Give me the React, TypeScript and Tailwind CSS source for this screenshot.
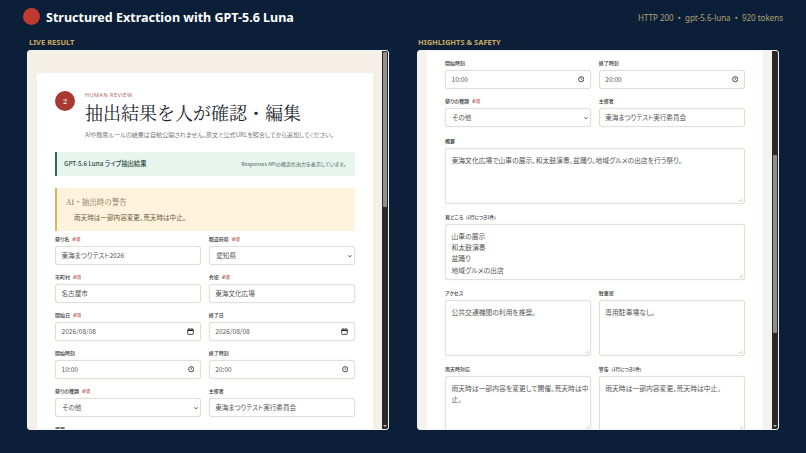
const serif = "font-['Noto_Serif_CJK_JP','Liberation_Serif','Noto_Sans_CJK_JP',serif]";
const sans = "font-['Noto_Sans_CJK_JP','Noto_Sans',sans-serif]";
const palt = "[font-feature-settings:'palt']";

function Label({ text, req, note }: { text: string; req?: boolean; note?: string }) {
  return (
    <div className={`h-[8px] mb-[3px] flex items-center gap-[2px] text-[5px] leading-[8px] font-medium text-[#3a3a3a] whitespace-nowrap ${palt}`}>
      <span>{text}</span>
      {note && <span className="text-[4.5px]">{note}</span>}
      {req && <span className="ml-[1px] text-[4px] text-[#a83a32]">必須</span>}
    </div>
  );
}

function ClockIcon() {
  return (
    <svg width="6.5" height="6.5" viewBox="0 0 12 12" fill="none" stroke="#222" strokeWidth="1.5">
      <circle cx="6" cy="6" r="4.8" />
      <path d="M6 3v3l2 1.5" strokeWidth="1.2" />
    </svg>
  );
}

function CalIcon() {
  return (
    <svg width="7" height="7" viewBox="0 0 12 12" fill="none" stroke="#222" strokeWidth="1.4">
      <rect x="1.2" y="2" width="9.6" height="9" rx="1" />
      <path d="M1.2 4.2h9.6" strokeWidth="2" />
      <path d="M3.5 0.5v2M8.5 0.5v2" />
    </svg>
  );
}

function Box({ value, icon, select, plain }: { value: string; icon?: "clock" | "cal"; select?: boolean; plain?: boolean }) {
  return (
    <div className={`h-[19px] rounded-[3px] border border-[#e2dfd8] shadow-[0_0_1px_#d8d5ce] bg-white flex items-center justify-between text-[6.6px] text-[#555] ${plain ? "" : palt} ${select ? "pl-[6.5px] pr-[2px]" : "pl-[5.5px] pr-[6px]"}`}>
      <span className="whitespace-nowrap">{value}</span>
      {icon === "clock" && <ClockIcon />}
      {icon === "cal" && <CalIcon />}
      {select && (
        <svg width="4" height="4" viewBox="0 0 10 10" fill="none" stroke="#333" strokeWidth="2.4">
          <path d="M1.5 3.5 5 7l3.5-3.5" />
        </svg>
      )}
    </div>
  );
}

function Field({ label, req, note, value, icon, select, plain }: { label: string; req?: boolean; note?: string; value: string; icon?: "clock" | "cal"; select?: boolean; plain?: boolean }) {
  return (
    <div className="min-w-0">
      <Label text={label} req={req} note={note} />
      <Box value={value} icon={icon} select={select} plain={plain} />
    </div>
  );
}

function Area({ label, note, lines }: { label: string; note?: string; lines: string[] }) {
  return (
    <div className="min-w-0">
      <Label text={label} note={note} />
      <div className={`relative h-[56px] rounded-[3px] border border-[#e2dfd8] shadow-[0_0_1px_#d8d5ce] bg-white px-[5.5px] pt-[5.5px] text-[6.8px] leading-[11.4px] text-[#555] ${palt}`}>
        {lines.map((l) => (
          <div key={l} className="whitespace-nowrap">{l}</div>
        ))}
        <svg className="absolute right-[1px] bottom-[1px]" width="4" height="4" viewBox="0 0 4 4" stroke="#aaa" strokeWidth="0.5">
          <path d="M0 4 4 0M2 4l2-2" />
        </svg>
      </div>
    </div>
  );
}

function Scrollbar({ before, thumb }: { before: number; thumb: number }) {
  return (
    <div className="w-[6px] shrink-0 bg-[#2b2a28] flex flex-col items-center">
      <div style={{ height: before }} className="w-full shrink-0" />
      <div style={{ height: thumb }} className="w-[4.5px] shrink-0 bg-[#8f8f8f] rounded-[1px]" />
      <div className="flex-1" />
      <div className="h-[7px] flex items-center justify-center">
        <div className="w-0 h-0 border-l-[2px] border-r-[2px] border-t-[2px] border-l-transparent border-r-transparent border-t-[#bbb]" />
      </div>
    </div>
  );
}

function Row({ children }: { children: React.ReactNode }) {
  return <div className="grid grid-cols-2 gap-x-[7.5px]">{children}</div>;
}

function LeftPanel() {
  return (
    <div className="h-[380px] rounded-[3px] overflow-hidden flex bg-[#f4f0e7] border border-[#f2f2f2]">
      <div className="flex-1 min-w-0 overflow-hidden pl-[9px] pr-[9.5px] pt-[22px]">
        <div className="bg-white h-[400px] pl-[18px] pr-[17.5px] pt-[18px]">
          <div className="flex gap-[10px]">
            <div className={`w-[20px] h-[20px] rounded-full bg-[#a93a33] text-white text-[7px] font-bold flex items-center justify-center shrink-0 ${serif}`}>2</div>
            <div className="min-w-0">
              <div className="text-[5.5px] leading-[8px] tracking-[0.5px] font-medium text-[#a85a52] font-['Open_Sans',sans-serif]">HUMAN REVIEW</div>
              <div className={`text-[18px] leading-[27px] text-[#22262e] whitespace-nowrap ${serif}`}>抽出結果を人が確認・編集</div>
              <div className={`text-[6.1px] leading-[10px] mt-[4px] text-[#77777a] whitespace-nowrap ${palt}`}>AIや簡易ルールの結果は自動公開されません。原文と公式URLを照合してから追加してください。</div>
            </div>
          </div>
          <div className={`mt-[12px] h-[24px] bg-[#e8f5ef] border-l-2 border-[#2f6b57] pl-[7px] pr-[9px] flex items-center justify-between ${palt}`}>
            <span className="text-[6.3px] font-medium text-[#2a4a40]">GPT-5.6 Luna ライブ抽出結果</span>
            <span className="text-[5.1px] text-[#4a6a60]">Responses APIの構造化出力を表示しています。</span>
          </div>
          <div className="mt-[12px] h-[43px] bg-[#fff3dc] border-l-2 border-[#d8b565] pl-[9px] pt-[8px]">
            <div className={`text-[7.5px] leading-[12px] text-[#7a6a4a] ${serif}`}>AI・抽出時の警告</div>
            <div className={`text-[6.6px] leading-[11px] mt-[4px] ml-[8px] text-[#6a5a3a] ${palt}`}>雨天時は一部内容変更、荒天時は中止。</div>
          </div>
          <div className="mt-[4px] flex flex-col gap-[8px]">
            <Row>
              <Field label="祭り名" req value="東海まつりテスト2026" />
              <Field label="都道府県" req value="愛知県" select plain />
            </Row>
            <Row>
              <Field label="市町村" req value="名古屋市" />
              <Field label="会場" req value="東海文化広場" />
            </Row>
            <Row>
              <Field label="開始日" req value="2026/08/08" icon="cal" />
              <Field label="終了日" value="2026/08/08" icon="cal" />
            </Row>
            <Row>
              <Field label="開始時刻" value="10:00" icon="clock" />
              <Field label="終了時刻" value="20:00" icon="clock" />
            </Row>
            <Row>
              <Field label="祭りの種類" req value="その他" select />
              <Field label="主催者" value="東海まつりテスト実行委員会" />
            </Row>
            <Label text="概要" />
          </div>
        </div>
      </div>
      <Scrollbar before={1} thumb={155} />
    </div>
  );
}

function RightPanel() {
  return (
    <div className="h-[380px] rounded-[3px] overflow-hidden flex bg-[#f5f3ee] border border-[#f2f2f2]">
      <div className="flex-1 min-w-0 overflow-hidden pl-[9px] pr-[9.5px]">
        <div className="bg-white h-[400px] pl-[18px] pr-[17.5px] pt-[8px]">
          <div className="flex flex-col gap-[8px]">
            <Row>
              <Field label="開始時刻" value="10:00" icon="clock" />
              <Field label="終了時刻" value="20:00" icon="clock" />
            </Row>
            <Row>
              <Field label="祭りの種類" req value="その他" select />
              <Field label="主催者" value="東海まつりテスト実行委員会" />
            </Row>
          </div>
          <div className="mt-[10px] flex flex-col gap-[9px]">
            <Area label="概要" lines={["東海文化広場で山車の展示、和太鼓演奏、盆踊り、地域グルメの出店を行う祭り。"]} />
            <Area label="見どころ" note="（1行につき1件）" lines={["山車の展示", "和太鼓演奏", "盆踊り", "地域グルメの出店"]} />
            <Row>
              <Area label="アクセス" lines={["公共交通機関の利用を推奨。"]} />
              <Area label="駐車場" lines={["専用駐車場なし。"]} />
            </Row>
            <Row>
              <Area label="雨天時対応" lines={["雨天時は一部内容を変更して開催。荒天時は中", "止。"]} />
              <Area label="警告" note="（1行につき1件）" lines={["雨天時は一部内容変更、荒天時は中止。"]} />
            </Row>
          </div>
        </div>
      </div>
      <Scrollbar before={104} thumb={178} />
    </div>
  );
}

export default function App() {
  return (
    <div className={`w-[806px] h-[453px] overflow-hidden bg-[#0b1f38] ${sans}`}>
      <header className="h-[36px] pl-[23px] pr-[23px] flex items-center justify-between">
        <div className="flex items-center gap-[6px]">
          <div className="w-[17px] h-[17px] rounded-full bg-[#c0392f] -mt-[4px]" />
          <h1 className="text-[12.5px] font-bold text-white font-['Noto_Sans',sans-serif] whitespace-nowrap">Structured Extraction with GPT-5.6 Luna</h1>
        </div>
        <div className="text-[8px] text-[#b3a274] font-['Noto_Sans',sans-serif] whitespace-pre">HTTP 200  •  gpt-5.6-luna  •  920 tokens</div>
      </header>
      <main className="px-[27px] grid grid-cols-[362px_362px] gap-x-[28px]">
        <section>
          <h2 className="h-[14px] pl-[2px] text-[7.5px] leading-[12px] font-bold text-[#c9a961] font-['Noto_Sans',sans-serif]">LIVE RESULT</h2>
          <LeftPanel />
        </section>
        <section>
          <h2 className="h-[14px] pl-[1px] text-[7.5px] leading-[12px] font-bold text-[#c9a961] font-['Noto_Sans',sans-serif]">HIGHLIGHTS &amp; SAFETY</h2>
          <RightPanel />
        </section>
      </main>
    </div>
  );
}
